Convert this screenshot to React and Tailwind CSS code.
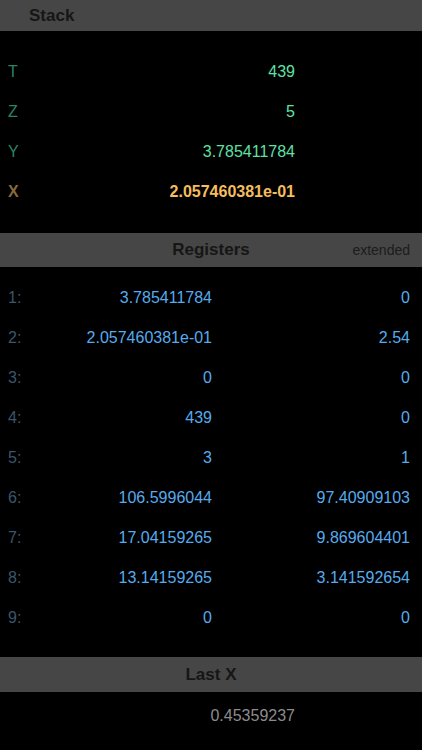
const stack = [
  { label: 'T', value: '439' },
  { label: 'Z', value: '5' },
  { label: 'Y', value: '3.785411784' },
]

const registers = [
  ['3.785411784', '0'],
  ['2.057460381e-01', '2.54'],
  ['0', '0'],
  ['439', '0'],
  ['3', '1'],
  ['106.5996044', '97.40909103'],
  ['17.04159265', '9.869604401'],
  ['13.14159265', '3.141592654'],
  ['0', '0'],
]

function SectionHeader({ children, className = '' }) {
  return (
    <div className={`relative flex items-center bg-[#464646] font-bold text-[17px] text-[#161616] ${className}`}>
      {children}
    </div>
  )
}

export default function App() {
  return (
    <div className="h-[750px] w-[422px] overflow-hidden bg-black font-['Liberation_Sans',Arial,sans-serif]">
      <SectionHeader className="h-[31px] pl-[29px]">Stack</SectionHeader>

      <div className="pt-[21px] pb-[21px]">
        {stack.map((row) => (
          <div key={row.label} className="flex h-10 items-center pl-2 pr-[127px] text-base">
            <span className="text-[#2c8466]">{row.label}</span>
            <span className="ml-auto text-[#5fe0a6]">{row.value}</span>
          </div>
        ))}
        <div className="flex h-10 items-center pl-2 pr-[127px] text-base font-bold">
          <span className="text-[#87693a]">X</span>
          <span className="ml-auto text-[#f4bd5e]">2.057460381e-01</span>
        </div>
      </div>

      <SectionHeader className="h-[34px] justify-center">
        Registers
        <span className="absolute right-3 text-sm font-normal text-[#1c1c1c]">extended</span>
      </SectionHeader>

      <div className="pt-[11px] pb-[19px]">
        {registers.map(([a, b], i) => (
          <div key={i} className="grid h-10 grid-cols-[1fr_198px] items-center pl-2 pr-3 text-base">
            <div className="flex">
              <span className="text-[#3a566c]">{i + 1}:</span>
              <span className="ml-auto text-[#56abee]">{a}</span>
            </div>
            <span className="text-right text-[#56abee]">{b}</span>
          </div>
        ))}
      </div>

      <SectionHeader className="h-[35px] justify-center">Last X</SectionHeader>

      <div className="flex h-12 items-center justify-end pr-[127px] text-base text-[#8c8c8c]">
        0.45359237
      </div>
    </div>
  )
}
